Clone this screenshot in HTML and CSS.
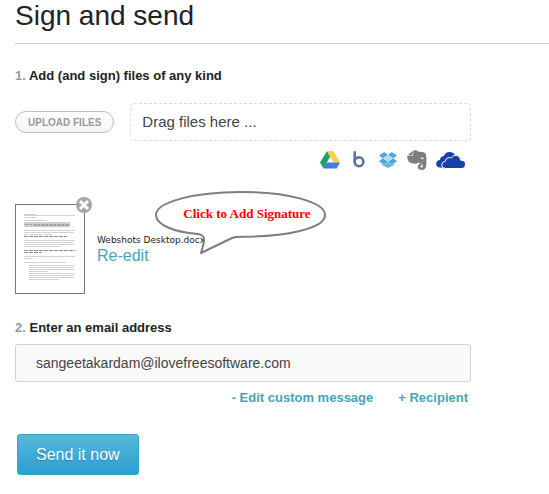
FILE: index.html
```
<!DOCTYPE html>
<html lang="en">

<head>
    <meta charset="UTF-8">
    <meta name="viewport" content="width=device-width, initial-scale=1.0">
    <title>Sign and send</title>
    <link rel="stylesheet" href="styles.css">
</head>

<body>
    <h1>Sign and send</h1>

    <form class="send-form">
        <h2><span class="step">1.</span> Add (and sign) files of any kind</h2>

        <div class="upload">
            <button type="button" class="upload-btn">UPLOAD FILES</button>
            <div class="dropzone">Drag files here ...</div>
        </div>

        <div class="services">
            <!-- Google Drive -->
            <a href="#" aria-label="Google Drive">
                <svg width="20" height="18" viewBox="0 0 20 18">
                    <path fill="#1da462" d="M7 0 L10.2 5.6 L3.4 17.4 L0 11.6 Z" />
                    <path fill="#ffcf48" d="M7 0 H13.2 L20 11.6 H13.5 Z" />
                    <path fill="#3b7de0" d="M6.7 11.6 H20 L16.7 17.4 H3.4 Z" />
                </svg>
            </a>
            <!-- Box -->
            <a href="#" aria-label="Box">
                <svg width="12" height="18" viewBox="0 0 12 18">
                    <path fill="none" stroke="#56799d" stroke-width="2.6" stroke-linecap="round" d="M1.7 1.4 V10.6" />
                    <circle fill="none" stroke="#56799d" stroke-width="2.6" cx="6" cy="10.8" r="4.4" />
                </svg>
            </a>
            <!-- Dropbox -->
            <a href="#" aria-label="Dropbox">
                <svg width="18" height="16" viewBox="0 0 18 16">
                    <path fill="#4ba7dc" d="M5.3 0 L9 3 L3.7 6.3 L0 3.4 Z M12.7 0 L18 3.4 L14.3 6.3 L9 3 Z M0 9.2 L3.7 6.3 L9 9.6 L5.3 12.7 Z M14.3 6.3 L18 9.2 L12.7 12.7 L9 9.6 Z" />
                    <path fill="#b5dcf2" d="M9 3 L14.3 6.3 L9 9.6 L3.7 6.3 Z" />
                    <path fill="#63b3e0" d="M9 10 L12.7 13 L15 11.6 V13 L9 16 L3 13 V11.6 L5.3 13 Z" />
                </svg>
            </a>
            <!-- Evernote -->
            <a href="#" aria-label="Evernote">
                <svg width="20" height="20" viewBox="0 0 20 20">
                    <path fill="#7d7d7d" d="M5.6 0.8 V4.5 Q5.6 5.2 4.8 5.2 H0.9 Z" />
                    <path fill="#7d7d7d" d="M6.2 0.6 Q9.8 -0.5 11 1.4 L16.5 2.2 Q18.6 2.6 18.9 4.6 Q20 11.500 18.9 17 Q18.200 19.9 14.9 19.9 Q10.900 19.900 10.900 16.900 Q10.900 13.700 14.400 13.800 L14.400 15.900 Q13.200 15.900 13.300 16.900 Q13.500 17.600 14.700 17.600 Q15.900 17.500 15.800 15.700 Q15.700 13.900 13.100 13.500 Q11.700 13.300 11.100 12.200 Q10.600 13.900 7.800 13.800 Q4 13.600 1.900 12 Q0.200 10 0.100 5.700 H5 Q6.200 5.700 6.200 4.500 Z" />
                    <path fill="#fff" d="M13.8 8.9 Q14.1 7.1 15.6 7.4 Q16.7 7.7 16.7 9.3 Q15.3 8.7 13.8 8.9 Z" />
                </svg>
            </a>
            <!-- OneDrive -->
            <a href="#" aria-label="OneDrive">
                <svg width="30" height="17" viewBox="0 0 30 17">
                    <path fill="#1740a8" d="M4.4 15.6 Q0 15.2 0.2 11.4 Q0.5 8.2 4 8.1 Q4.3 4.4 7.7 4.2 Q9.5 0.2 13.5 0.1 Q17.6 0 19.6 3.9 L20 10 H9 V16 Z" />
                    <path fill="#1740a8" stroke="#fff" d="M9.4 16.5 Q5.7 16.2 5.7 12.9 Q5.8 9.7 9.3 9.2 Q9.6 5.6 13.2 5.5 Q14.3 5.4 15.3 6 Q16.8 2.9 20.4 3.3 Q24.3 3.8 24.7 8.2 Q29.4 8.1 29.5 12.2 Q29.4 16.4 25.6 16.5 Z" />
                </svg>
            </a>
        </div>

        <div class="file">
            <div class="thumb">
                <svg width="52" height="68" viewBox="0 0 52 68" aria-hidden="true">
                    <g stroke="#d2d2d2">
                        <path d="M0 1.5 H13 M0 2.5 H51 M0 4.5 H13" />
                        <path d="M0 7.5 H23" />
                        <path d="M0 17.5 H51 M0 19.5 H50 M0 21.5 H28" />
                        <path d="M0 27.5 H51 M0 29.5 H50 M0 31.5 H50 M0 33.5 H36" />
                        <path d="M0 43.5 H51 M0 45.5 H9" />
                        <path d="M0 49.5 H42" />
                        <path d="M5 52.5 H51 M5 54.5 H50 M5 56.5 H51 M5 58.5 H24 M5 60.5 H51 M5 62.5 H50 M5 64.5 H50 M5 66.5 H35" />
                    </g>
                    <path fill="#d0d0d0" d="M0 9 H46 V14 H0 Z" />
                    <path stroke="#a0a0a0" stroke-dasharray="3 1" d="M1 11.5 H46 M10 12.5 H45" />
                    <path stroke="#8c8c8c" stroke-dasharray="4 1" d="M0 23.5 H43 M0 37.5 H51 M0 39.5 H18" />
                </svg>
                <button type="button" class="remove" aria-label="Remove file">
                    <svg width="16" height="16" viewBox="0 0 16 16">
                        <circle cx="8" cy="8" r="8" fill="#a6a6a6" />
                        <path stroke="#fff" stroke-width="3" d="M4 4 L12 12 M12 4 L4 12" />
                    </svg>
                </button>
            </div>
            <div class="file-info">
                <span class="file-name">Webshots Desktop.docx</span>
                <a href="#" class="re-edit">Re-edit</a>
            </div>
            <div class="bubble">
                <svg width="172" height="66" viewBox="0 0 172 66" aria-hidden="true">
                    <path fill="none" stroke="#7f7f7f" stroke-width="2" stroke-linejoin="round" d="M80 46 C130 46 170 38 170 24 C170 11 133 1 86 1 C39 1 1 11 1 24 C1 34 19 41 43 43 C51 44 50 49 46 62 L77 47 Q79 46 84 46" />
                </svg>
                <span>Click to Add Signature</span>
            </div>
        </div>

        <h2><span class="step">2.</span> <label for="email">Enter an email address</label></h2>
        <input type="email" id="email" class="email" value="sangeetakardam@ilovefreesoftware.com">

        <div class="links">
            <a href="#">- Edit custom message</a>
            <a href="#">+ Recipient</a>
        </div>

        <button type="button" class="send-btn">Send it now</button>
    </form>
</body>

</html>
```
FILE: styles.css
```
* {
    box-sizing: border-box;
}

body {
    margin: 0;
    padding-left: 15px;
    background: #fff;
    color: #222;
    font-family: Arial, "Liberation Sans", sans-serif;
}

h1 {
    margin: 0;
    padding-bottom: 12px;
    border-bottom: 1px solid #c8cccb;
    font-size: 28px;
    font-weight: normal;
    line-height: 31px;
}

h2 {
    margin: 0;
    font-size: 13px;
    line-height: 16px;
}

.step {
    color: #999;
}

a {
    color: #46a5b5;
    text-decoration: none;
}

button {
    font-family: inherit;
    cursor: pointer;
}

.send-form {
    max-width: 456px;
    padding-top: 24px;
}

/* Upload row */
.upload {
    display: flex;
    align-items: center;
    gap: 16px;
    margin-top: 19px;
}

.upload-btn {
    height: 22px;
    padding: 0 12px;
    border: 1px solid #bdbdce;
    border-radius: 11px;
    background: linear-gradient(#fff, #f4f4f9);
    color: #999;
    font-size: 10px;
    font-weight: bold;
}

.dropzone {
    flex: 1;
    padding: 0 11px;
    border: 1px dashed #dcdcdc;
    border-radius: 4px;
    color: #444;
    font-size: 15px;
    line-height: 36px;
}

.services {
    display: flex;
    justify-content: flex-end;
    align-items: center;
    gap: 9px;
    height: 20px;
    margin-top: 9px;
    padding-right: 5px;
}

.services a {
    display: flex;
    justify-content: center;
    min-width: 20px;
}

/* Uploaded file */
.file {
    position: relative;
    display: flex;
    gap: 12px;
    margin: 34px 0 26px;
}

.thumb {
    position: relative;
    width: 70px;
    height: 90px;
    padding: 8px;
    border: 1px solid #777;
}

.remove {
    position: absolute;
    top: -8px;
    right: -8px;
    padding: 0;
    border: 0;
    background: none;
}

.remove svg {
    display: block;
}

.file-info {
    display: flex;
    flex-direction: column;
    padding-top: 30px;
}

.file-name {
    font-family: Verdana, "DejaVu Sans", sans-serif;
    font-size: 9px;
    line-height: 12px;
}

.re-edit {
    font-size: 16px;
    line-height: 20px;
}

/* Speech bubble hanging over the file name */
.bubble {
    position: absolute;
    top: -13px;
    left: 140px;
}

.bubble svg {
    display: block;
}

.bubble span {
    position: absolute;
    top: 15px;
    left: 0;
    width: 100%;
    padding-left: 12px;
    color: #f00;
    font: bold 13px/16px "Times New Roman", "Liberation Serif", serif;
    text-align: center;
    white-space: nowrap;
}

/* Recipient */
.email {
    display: block;
    width: 100%;
    height: 38px;
    margin-top: 8px;
    padding: 0 20px;
    border: 1px solid #d2d2d2;
    border-radius: 3px;
    background: #f9f9f9;
    color: #444;
    font: 14px Arial, "Liberation Sans", sans-serif;
}

.links {
    display: flex;
    justify-content: flex-end;
    gap: 25px;
    margin-top: 7px;
    padding-right: 3px;
    font-size: 13px;
    font-weight: bold;
    line-height: 17px;
}

.send-btn {
    height: 41px;
    margin: 28px 2px;
    padding: 0 18px;
    border: 1px solid #3a9fc9;
    border-radius: 3px;
    background: linear-gradient(#58b7dc, #2b9fd2);
    color: #fff;
    font-size: 16px;
    text-shadow: 0 1px 1px #2580a8;
}
```
